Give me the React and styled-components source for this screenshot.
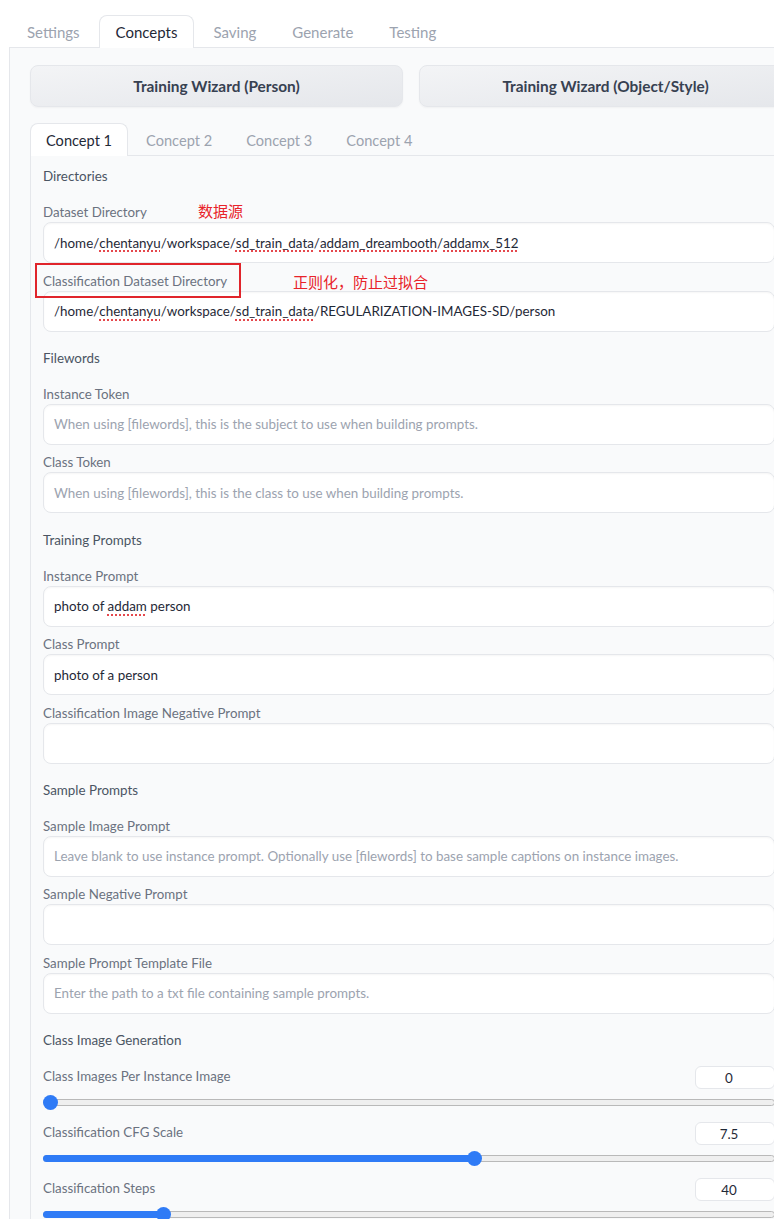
import React from "react";
import styled, { createGlobalStyle } from "styled-components";

const GlobalStyle = createGlobalStyle`
  body {
    margin: 0;
    overflow: hidden;
    background: #ffffff;
    font-family: Lato, "Noto Sans", "Noto Sans CJK SC", sans-serif;
  }
`;

const Page = styled.div`
  width: 820px;
  padding: 15px 0 0 9px;
`;

const TabNav = styled.div`
  display: flex;
  gap: 2px;
  padding-left: 1px;
`;

const Tab = styled.div`
  height: 33px;
  padding: 0 ${(p) => (p.small ? 15 : 16)}px;
  display: flex;
  align-items: center;
  font-size: ${(p) => (p.small ? 14.6 : 15)}px;
  color: ${(p) => (p.active ? "#1f2937" : "#9ca3af")};
  background: ${(p) => (p.active ? "#ffffff" : "transparent")};
  border: 1px solid ${(p) => (p.active ? "#e5e7eb" : "transparent")};
  border-bottom: none;
  border-radius: 8px 8px 0 0;
  margin-bottom: -1px;
  position: relative;
  z-index: 1;
  box-sizing: border-box;
`;

const OuterPanel = styled.div`
  width: 804px;
  box-sizing: border-box;
  border: 1px solid #e5e7eb;
  border-right: none;
  background: #f9fafb;
  padding: 17px 20px 40px 20px;
`;

const WizardRow = styled.div`
  display: grid;
  grid-template-columns: 373px 373px;
  gap: 16px;
`;

const WizardButton = styled.button`
  height: 42px;
  border: 1px solid #e5e7eb;
  border-radius: 8px;
  background: linear-gradient(to bottom right, #f3f4f6, #e5e7eb);
  color: #374151;
  font-family: Lato, "Noto Sans", sans-serif;
  font-weight: 700;
  font-size: 15.4px;
  box-shadow: 0 1px 2px rgba(0, 0, 0, 0.04);
`;

const ConceptNav = styled(TabNav)`
  margin-top: 16px;
  padding-left: 0;
`;

const ConceptPanel = styled.div`
  width: 762px;
  box-sizing: border-box;
  border-top: 1px solid #e5e7eb;
  border-left: 1px solid #e5e7eb;
  padding: 10px 17px 0 12px;
`;

const Sections = styled.div`
  display: flex;
  flex-direction: column;
  gap: 16.3px;
`;

const Section = styled.div`
  display: flex;
  flex-direction: column;
`;

const SectionTitle = styled.div`
  font-size: 13.4px;
  line-height: 20px;
  color: #4b5563;
  margin-bottom: 16px;
`;

const Fields = styled.div`
  display: flex;
  flex-direction: column;
  gap: 7.5px;
`;

const Field = styled.div`
  position: relative;
  display: flex;
  flex-direction: column;
`;

const Label = styled.div`
  font-size: 13.3px;
  line-height: 20px;
  color: #6b7280;
`;

const TextBox = styled.div`
  height: 41px;
  box-sizing: border-box;
  background: #ffffff;
  border: 1px solid #e5e7eb;
  border-radius: 8px;
  box-shadow: inset 0 1px 2px rgba(0, 0, 0, 0.04);
  padding: 0 10px;
  display: flex;
  align-items: center;
  font-size: 13.4px;
  white-space: nowrap;
  overflow: hidden;
  color: ${(p) => (p.placeholder ? "#9ca3af" : "#1f2937")};
`;

const Misspelt = styled.span`
  text-decoration: underline dotted #e5484d;
  text-decoration-thickness: 1.5px;
  text-underline-offset: 3px;
`;

const Note = styled.div`
  position: absolute;
  left: ${(p) => p.left}px;
  top: ${(p) => p.top}px;
  font-size: 15px;
  line-height: 20px;
  color: #e8232a;
  font-family: "Noto Sans CJK SC", sans-serif;
  white-space: nowrap;
`;

const MarkBox = styled.div`
  position: absolute;
  left: -8px;
  top: -8px;
  width: 206px;
  height: 35px;
  box-sizing: border-box;
  border: 2px solid #e0242b;
`;

const SliderStack = styled.div`
  display: flex;
  flex-direction: column;
  gap: 12px;
`;

const SliderRow = styled.div`
  display: flex;
  flex-direction: column;
`;

const SliderHead = styled.div`
  display: flex;
  justify-content: space-between;
  align-items: flex-start;
  height: 23px;
`;

const NumberBox = styled.div`
  width: 80px;
  height: 23px;
  box-sizing: border-box;
  background: #ffffff;
  border: 1px solid #e5e7eb;
  border-radius: 6px;
  font-size: 13.4px;
  color: #1f2937;
  display: flex;
  align-items: center;
  justify-content: center;
  padding-right: 12px;
`;

const Track = styled.div`
  position: relative;
  margin-top: 6px;
  height: 15px;
  display: flex;
  align-items: center;
`;

const Rail = styled.div`
  position: relative;
  width: 100%;
  height: 7px;
  box-sizing: border-box;
  background: #efefef;
  border: 1px solid #b9b9b9;
  border-radius: 4px;
`;

const Fill = styled.div`
  position: absolute;
  left: -1px;
  top: -1px;
  bottom: -1px;
  background: #2f7bf6;
  border-radius: 4px;
`;

const Thumb = styled.div`
  position: absolute;
  top: 0;
  width: 15px;
  height: 15px;
  border-radius: 50%;
  background: #2f7bf6;
`;

const Slider = ({ label, value, min, max }) => {
  const frac = (value - min) / (max - min);
  const pos = `calc(${frac} * (100% - 15px))`;
  return (
    <SliderRow>
      <SliderHead>
        <Label>{label}</Label>
        <NumberBox>{value}</NumberBox>
      </SliderHead>
      <Track>
        <Rail>{frac > 0 && <Fill style={{ width: `calc(${pos} + 8px)` }} />}</Rail>
        <Thumb style={{ left: pos }} />
      </Track>
    </SliderRow>
  );
};

const App = () => {
  return (
    <Page>
      <GlobalStyle />
      <TabNav>
        <Tab>Settings</Tab>
        <Tab active>Concepts</Tab>
        <Tab>Saving</Tab>
        <Tab>Generate</Tab>
        <Tab>Testing</Tab>
      </TabNav>
      <OuterPanel>
        <WizardRow>
          <WizardButton>Training Wizard (Person)</WizardButton>
          <WizardButton>Training Wizard (Object/Style)</WizardButton>
        </WizardRow>
        <ConceptNav>
          <Tab small active>Concept 1</Tab>
          <Tab small>Concept 2</Tab>
          <Tab small>Concept 3</Tab>
          <Tab small>Concept 4</Tab>
        </ConceptNav>
        <ConceptPanel>
          <Sections>
            <Section>
              <SectionTitle>Directories</SectionTitle>
              <Fields>
                <Field>
                  <Label>Dataset Directory</Label>
                  <Note left={155} top={-1}>数据源</Note>
                  <TextBox>
                    /home/<Misspelt>chentanyu</Misspelt>/workspace/<Misspelt>sd_train_data</Misspelt>/<Misspelt>addam_dreambooth</Misspelt>/<Misspelt>addamx_512</Misspelt>
                  </TextBox>
                </Field>
                <Field>
                  <MarkBox />
                  <Label>Classification Dataset Directory</Label>
                  <Note left={250} top={1}>正则化，防止过拟合</Note>
                  <TextBox>
                    /home/<Misspelt>chentanyu</Misspelt>/workspace/<Misspelt>sd_train_data</Misspelt>/REGULARIZATION-IMAGES-SD/person
                  </TextBox>
                </Field>
              </Fields>
            </Section>
            <Section>
              <SectionTitle>Filewords</SectionTitle>
              <Fields>
                <Field>
                  <Label>Instance Token</Label>
                  <TextBox placeholder>When using [filewords], this is the subject to use when building prompts.</TextBox>
                </Field>
                <Field>
                  <Label>Class Token</Label>
                  <TextBox placeholder>When using [filewords], this is the class to use when building prompts.</TextBox>
                </Field>
              </Fields>
            </Section>
            <Section>
              <SectionTitle>Training Prompts</SectionTitle>
              <Fields>
                <Field>
                  <Label>Instance Prompt</Label>
                  <TextBox>
                    photo of&nbsp;<Misspelt>addam</Misspelt>&nbsp;person
                  </TextBox>
                </Field>
                <Field>
                  <Label>Class Prompt</Label>
                  <TextBox>photo of a person</TextBox>
                </Field>
                <Field>
                  <Label>Classification Image Negative Prompt</Label>
                  <TextBox />
                </Field>
              </Fields>
            </Section>
            <Section>
              <SectionTitle>Sample Prompts</SectionTitle>
              <Fields>
                <Field>
                  <Label>Sample Image Prompt</Label>
                  <TextBox placeholder>
                    Leave blank to use instance prompt. Optionally use [filewords] to base sample captions on instance images.
                  </TextBox>
                </Field>
                <Field>
                  <Label>Sample Negative Prompt</Label>
                  <TextBox />
                </Field>
                <Field>
                  <Label>Sample Prompt Template File</Label>
                  <TextBox placeholder>Enter the path to a txt file containing sample prompts.</TextBox>
                </Field>
              </Fields>
            </Section>
            <Section>
              <SectionTitle>Class Image Generation</SectionTitle>
              <SliderStack>
                <Slider label="Class Images Per Instance Image" value={0} min={0} max={1000} />
                <Slider label="Classification CFG Scale" value={7.5} min={1} max={12} />
                <Slider label="Classification Steps" value={40} min={10} max={200} />
              </SliderStack>
            </Section>
          </Sections>
        </ConceptPanel>
      </OuterPanel>
    </Page>
  );
};

export default App;
